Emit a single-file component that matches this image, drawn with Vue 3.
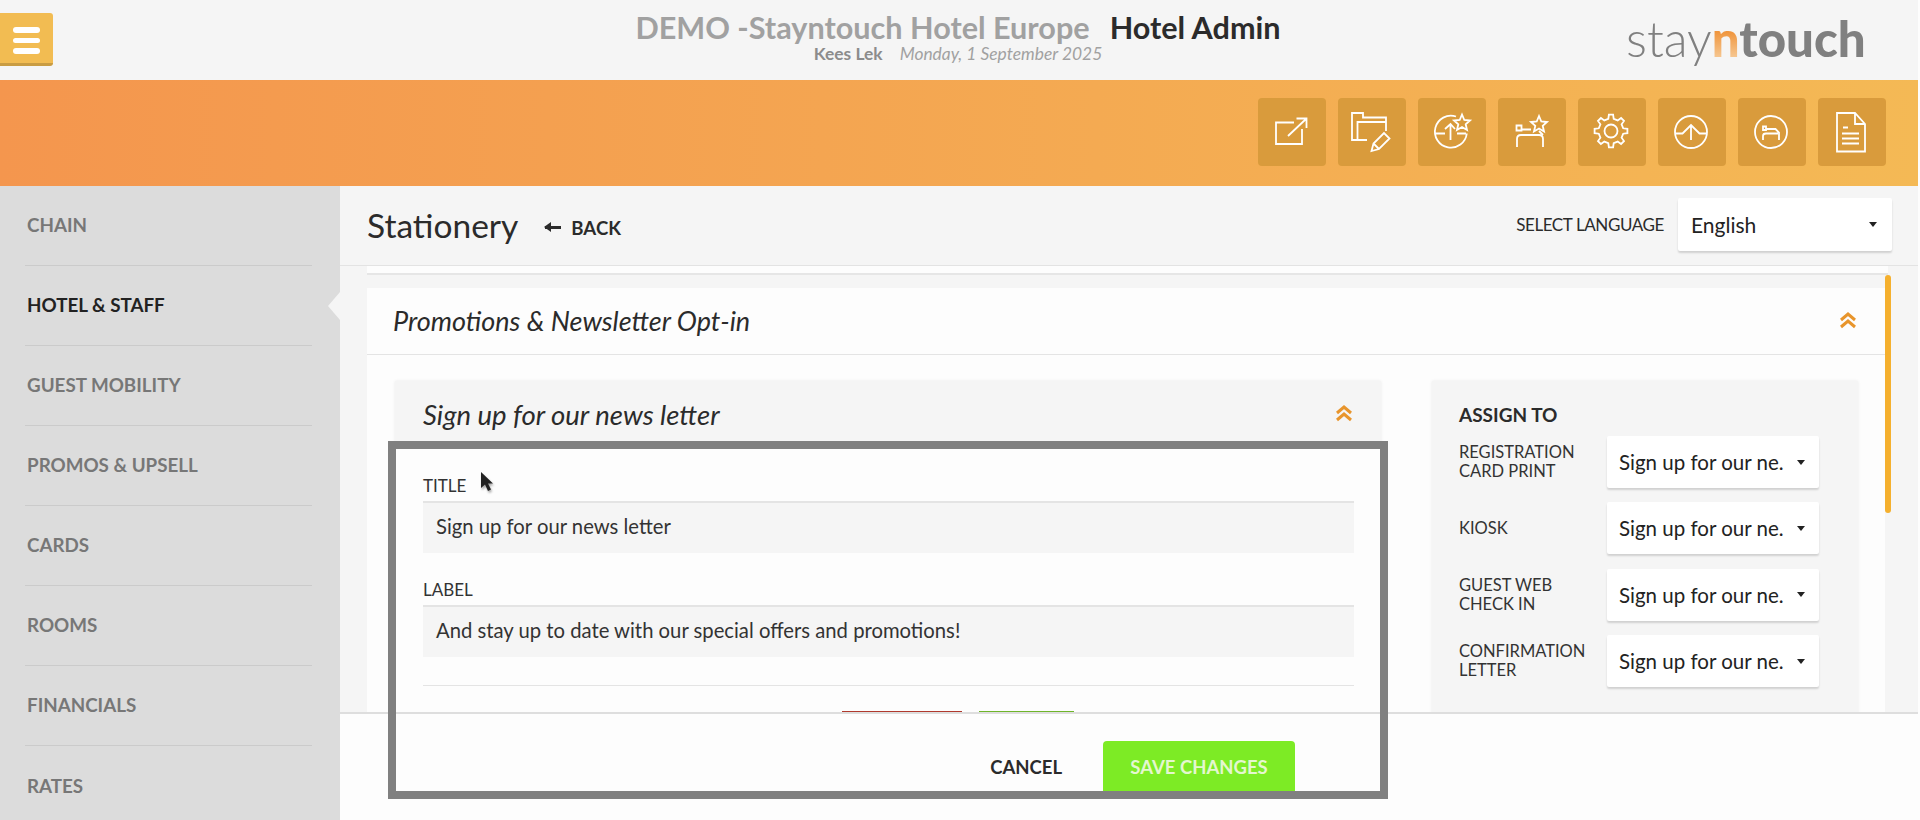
<script setup>
const nav = [
  { label: 'CHAIN' },
  { label: 'HOTEL & STAFF', active: true },
  { label: 'GUEST MOBILITY' },
  { label: 'PROMOS & UPSELL' },
  { label: 'CARDS' },
  { label: 'ROOMS' },
  { label: 'FINANCIALS' },
  { label: 'RATES' }
]
const assign = [
  ['REGISTRATION', 'CARD PRINT'],
  ['KIOSK'],
  ['GUEST WEB', 'CHECK IN'],
  ['CONFIRMATION', 'LETTER']
]
function gear(cx, cy, ro, ri, n) {
  const pts = []
  const step = (Math.PI * 2) / n
  for (let i = 0; i < n; i++) {
    const a = i * step - Math.PI / 2
    const w = step * 0.2
    const p = (r, t) => `${(cx + r * Math.cos(t)).toFixed(1)} ${(cy + r * Math.sin(t)).toFixed(1)}`
    pts.push(`${i ? 'L' : 'M'}${p(ri, a - w * 1.4)}`, `L${p(ro, a - w * 0.8)}`, `L${p(ro, a + w * 0.8)}`, `L${p(ri, a + w * 1.4)}`)
  }
  return pts.join(' ') + ' Z'
}
const gearPath = gear(33, 33, 16.5, 12.5, 8)
const star1 = 'M44 16.5 L46.3 22 L52 22.5 L47.7 26.3 L49 32 L44 29 L39 32 L40.3 26.3 L36 22.5 L41.7 22 Z'
const star2 = 'M41 18 L43.3 23.5 L49 24 L44.7 27.8 L46 33.5 L41 30.5 L36 33.5 L37.3 27.8 L33 24 L38.7 23.5 Z'
</script>

<template>
  <div class="page">
    <header class="top">
      <button class="burger" aria-label="Menu"><i></i><i></i><i></i></button>
      <div class="heading">
        <div class="heading-main">
          <span class="hotel">DEMO -Stayntouch Hotel Europe</span>
          <span class="admin">Hotel Admin</span>
        </div>
        <div class="heading-sub">
          <span class="user">Kees Lek</span>
          <span class="date">Monday, 1 September 2025</span>
        </div>
      </div>
      <div class="logo"><span class="l-stay">stay</span><span class="l-n">n</span><span class="l-touch">touch</span></div>
    </header>

    <div class="band">
      <div class="tile">
        <svg viewBox="0 0 68 68"><path d="M36 24.500H18V46H44V31" /><path d="M30 38L48 21M38.500 20.500H48.500V30" /></svg>
      </div>
      <div class="tile">
        <svg viewBox="0 0 68 68"><path d="M29 42H14V15H25V19.500H48V33" /><path d="M19.500 42V24H48" /><path d="M33.500 53L35.500 45.500L46 35L51.500 40.500L41 51ZM35.500 45.500L41 51" /></svg>
      </div>
      <div class="tile">
        <svg viewBox="0 0 68 68"><path d="M38 18.500A16 16 0 1 0 48.800 35.500M17 35.500H27M39 35.500H48M27 31L32.500 26L37 31M32.500 26V42" /><path :d="star1" /></svg>
      </div>
      <div class="tile">
        <svg viewBox="0 0 68 68"><path d="M19 49V41Q19 37 23 37H41Q45 37 45 41V49" /><path d="M18.500 27.500H23.500V32.500H18.500ZM23.500 31.500H33M41 33L45 37" /><path :d="star2" /></svg>
      </div>
      <div class="tile">
        <svg viewBox="0 0 68 68"><path :d="gearPath" /><circle cx="33" cy="33" r="6.500" /></svg>
      </div>
      <div class="tile">
        <svg viewBox="0 0 68 68"><circle cx="33" cy="34" r="16" /><path d="M17 35.500H24.500L33 27L41.500 35.500H49M33 27V42" /></svg>
      </div>
      <div class="tile">
        <svg viewBox="0 0 68 68"><circle cx="33" cy="34" r="16" /><path d="M25 28.500H28V32H25ZM28 31H37.500L41 34.500V42M25 42V38Q25 35.500 28 35.500H40" /></svg>
      </div>
      <div class="tile">
        <svg viewBox="0 0 68 68"><path d="M19 15H37L47 26V53.500H19ZM37 15V26H47" /><path d="M25 29.500H30M24 35.500H41M24 40.500H41M24 45.500H41" /></svg>
      </div>
    </div>

    <div class="body">
      <aside class="side">
        <div v-for="item in nav" :key="item.label" class="nav-item" :class="{ active: item.active }">
          <span>{{ item.label }}</span>
        </div>
      </aside>

      <main class="main">
        <div class="title-row">
          <h1>Stationery</h1>
          <div class="back"><span class="arrow"></span>BACK</div>
          <div class="lang">
            <span class="lang-label">SELECT LANGUAGE</span>
            <div class="select lang-select"><span>English</span><i class="caret"></i></div>
          </div>
        </div>

        <div class="scroller">
          <div class="scrollbar"></div>
          <div class="prev-strip"></div>
          <section class="panel">
            <div class="panel-head">
              <span>Promotions &amp; Newsletter Opt-in</span>
              <svg class="chev" viewBox="0 0 18 18"><path d="M2 8L9 2L16 8M2 15L9 9L16 15" /></svg>
            </div>
            <div class="panel-body">
              <div class="card">
                <div class="card-head">
                  <span>Sign up for our news letter</span>
                  <svg class="chev" viewBox="0 0 18 18"><path d="M2 8L9 2L16 8M2 15L9 9L16 15" /></svg>
                </div>
                <div class="card-body">
                  <div class="field-label">TITLE</div>
                  <div class="input">Sign up for our news letter</div>
                  <div class="field-label second">LABEL</div>
                  <div class="input">And stay up to date with our special offers and promotions!</div>
                  <div class="divider"></div>
                  <div class="form-actions"><i class="red"></i><i class="green"></i></div>
                </div>
              </div>
              <div class="assign">
                <h2>ASSIGN TO</h2>
                <div v-for="(row, i) in assign" :key="i" class="assign-row">
                  <div class="assign-label"><div v-for="l in row" :key="l">{{ l }}</div></div>
                  <div class="select small"><span>Sign up for our ne.</span><i class="caret"></i></div>
                </div>
              </div>
            </div>
          </section>
        </div>

        <footer class="foot">
          <span class="cancel">CANCEL</span>
          <button class="save">SAVE CHANGES</button>
        </footer>
      </main>
    </div>

    <div class="highlight"></div>
    <svg class="cursor" viewBox="0 0 14 22"><path d="M1 1V17L5 13.500L8 20L11 18.500L8 12.500H13Z" /></svg>
  </div>
</template>

<style>
html, body { margin: 0; background: #fdfdfd; }
</style>

<style scoped>
.page {
  position: relative;
  width: 1918px;
  height: 820px;
  overflow: hidden;
  display: flex;
  flex-direction: column;
  font-family: Lato, "Open Sans", sans-serif;
  color: #2b2b2b;
}
.top {
  height: 80px;
  flex: none;
  background: #f5f5f5;
  position: relative;
  display: flex;
}
.burger {
  margin: 13px 0 0;
  width: 53px;
  height: 53px;
  padding: 14px 13px 0;
  border: 0;
  border-bottom: 3px solid #c99c42;
  border-radius: 0 3px 3px 0;
  background: #f2bc52;
  box-sizing: border-box;
  display: flex;
  flex-direction: column;
  gap: 5px;
}
.burger i { display: block; width: 27px; height: 5.500px; border-radius: 3px; background: #fff; }
.heading {
  position: absolute;
  left: 603px;
  width: 710px;
  top: 10px;
  text-align: center;
}
.heading-main { font-size: 30.600px; font-weight: 700; line-height: 36px; white-space: nowrap; }
.hotel { color: #a1a1a1; margin-right: 20px; }
.admin { color: #2b2b2b; }
.heading-sub { font-size: 17.400px; line-height: 20px; margin-top: -2px; white-space: nowrap; }
.user { color: #8c8c8c; font-weight: 700; margin-right: 17px; }
.date { color: #a1a1a1; font-style: italic; }
.logo {
  position: absolute;
  left: 1626px;
  top: 5px;
  font-size: 49.200px;
  line-height: 66px;
  color: #808080;
  white-space: nowrap;
}
.l-stay { font-weight: 300; }
.l-n {
  font-weight: 900;
  background: linear-gradient(#ee8a2a 30%, #f8d9b0 100%);
  -webkit-background-clip: text;
  background-clip: text;
  color: transparent;
}
.l-touch { font-weight: 900; }

.band {
  height: 106px;
  flex: none;
  background: linear-gradient(90deg, #f4964e, #f4b955);
  display: flex;
  justify-content: flex-end;
  align-items: flex-start;
  gap: 12px;
  padding: 18px 32px 0 0;
  box-sizing: border-box;
}
.tile { width: 68px; height: 68px; border-radius: 4px; background: #d99b3c; }
.tile svg { display: block; width: 68px; height: 68px; }
.tile path, .tile circle { fill: none; stroke: #fff; stroke-width: 1.800; stroke-linejoin: miter; }

.body { flex: 1; min-height: 0; display: flex; }
.side {
  width: 340px;
  flex: none;
  background: #dcdcdc;
  padding: 0 28px 0 27px;
  box-sizing: border-box;
}
.nav-item {
  position: relative;
  height: 80px;
  display: flex;
  align-items: center;
  padding-bottom: 2px;
  box-sizing: border-box;
  border-bottom: 1px solid #cbcbcb;
  margin-left: -2px;
  padding-left: 2px;
  font-size: 18.800px;
  font-weight: 700;
  color: #777;
}
.nav-item:last-child { border-bottom: 0; }
.nav-item.active { color: #222; }
.nav-item.active::after {
  content: "";
  position: absolute;
  right: -28px;
  top: 26px;
  border: 14px solid transparent;
  border-left: 0;
  border-right: 12px solid #f5f5f5;
}

.main {
  flex: 1;
  min-width: 0;
  background: #f5f5f5;
  display: flex;
  flex-direction: column;
  position: relative;
}
.title-row {
  height: 80px;
  flex: none;
  display: flex;
  align-items: center;
  padding: 0 26px 2px 27px;
  box-sizing: border-box;
  border-bottom: 1px solid #e3e3e3;
}
h1 { margin: 0; font-size: 33.500px; font-weight: 400; color: #2b2b2b; }
.back {
  margin-left: 27px;
  padding-top: 6px;
  display: flex;
  align-items: center;
  font-size: 18.600px;
  font-weight: 700;
  color: #2b2b2b;
}
.arrow {
  position: relative;
  width: 16px;
  height: 3px;
  margin-right: 10px;
  background: #2b2b2b;
}
.arrow::before {
  content: "";
  position: absolute;
  left: -1px;
  top: -4px;
  border: 5.500px solid transparent;
  border-left: 0;
  border-right: 7px solid #2b2b2b;
}
.lang { margin-left: auto; display: flex; align-items: center; }
.lang-label { font-size: 17px; letter-spacing: -0.400px; margin-right: 14px; }
.select {
  background: #fff;
  box-shadow: 0 2px 2px rgba(0, 0, 0, 0.15);
  display: flex;
  align-items: center;
  justify-content: space-between;
  box-sizing: border-box;
  border-radius: 2px;
  color: #222;
}
.lang-select { width: 214px; height: 53px; padding: 0 15px 0 13px; font-size: 21px; }
.caret {
  width: 0;
  height: 0;
  border: 4px solid transparent;
  border-bottom: 0;
  border-top: 5px solid #222;
}

.scroller { flex: 1; min-height: 0; overflow: hidden; position: relative; padding-left: 27px; }
.scrollbar {
  position: absolute;
  left: 1545px;
  top: 9px;
  width: 6px;
  height: 238px;
  border-radius: 3px;
  background: #f5b02e;
}
.prev-strip { width: 1521px; height: 7px; background: #fdfdfd; border-bottom: 2px solid #e6e6e6; }
.panel { width: 1518px; margin-top: 13px; background: #fdfdfd; }
.panel-head {
  height: 66px;
  display: flex;
  align-items: center;
  justify-content: space-between;
  padding: 0 28px 0 26px;
  border-bottom: 1px solid #e4e4e4;
  font-size: 27px;
  font-style: italic;
}
.panel-head span { position: relative; top: -1px; }
.chev { width: 18px; height: 18px; flex: none; }
.chev path { fill: none; stroke: #e8952c; stroke-width: 3; }
.panel-body {
  display: flex;
  align-items: flex-start;
  gap: 51px;
  padding: 26px 26px 0 28px;
}
.card { width: 986px; flex: none; box-shadow: 0 0 3px rgba(0, 0, 0, 0.08); }
.card-head {
  height: 66px;
  background: #f5f5f5;
  display: flex;
  align-items: center;
  justify-content: space-between;
  padding: 0 28px 0 28px;
  font-size: 27.500px;
  font-style: italic;
}
.card-body { padding: 27px 27px 0 28px; background: #fdfdfd; }
.field-label { font-size: 17px; line-height: 24px; color: #333; margin-bottom: 3px; }
.field-label.second { margin-top: 25px; }
.input {
  height: 52px;
  line-height: 47px;
  padding-left: 13px;
  background: #f5f5f5;
  border-top: 2px solid #e4e4e4;
  box-sizing: border-box;
  font-size: 20.250px;
  color: #333;
}
.divider { height: 1px; margin-top: 28px; background: #e4e4e4; }
.form-actions { display: flex; gap: 17px; margin: 25px 0 0 419px; }
.form-actions i { display: block; height: 50px; }
.red { width: 120px; background: #b03a2e; }
.green { width: 95px; background: #6fb52a; }
.assign {
  width: 426px;
  flex: none;
  height: 420px;
  background: #f5f5f5;
  padding: 20px 0 0 27px;
  box-sizing: border-box;
  box-shadow: 0 0 3px rgba(0, 0, 0, 0.08);
}
h2 { margin: 0 0 7px; font-size: 19px; font-weight: 700; line-height: 28px; color: #2b2b2b; }
.assign-row { display: flex; align-items: center; height: 52px; margin-bottom: 14.400px; }
.assign-label { width: 148px; flex: none; font-size: 16.500px; line-height: 19px; color: #333; }
.small { width: 212px; height: 52px; padding: 0 14px 0 12px; font-size: 20.500px; }
.small span { white-space: nowrap; }

.foot {
  height: 108px;
  flex: none;
  position: relative;
  background: #fdfdfd;
  border-top: 2px solid #dedede;
  box-sizing: border-box;
  display: flex;
  justify-content: flex-end;
  align-items: flex-start;
  padding: 27px 623px 0 0;
}
.cancel { font-size: 18.500px; font-weight: 700; line-height: 52px; color: #2b2b2b; margin-right: 41px; }
.save {
  width: 192px;
  height: 54px;
  border: 0;
  border-radius: 4px;
  background: #7deb25;
  color: #e4f7cf;
  font-family: inherit;
  font-size: 18.500px;
  font-weight: 700;
  padding-bottom: 4px;
}

.highlight {
  position: absolute;
  left: 388px;
  top: 441px;
  width: 1000px;
  height: 358px;
  box-sizing: border-box;
  border: 8px solid #808080;
}
.cursor {
  position: absolute;
  left: 480px;
  top: 471px;
  width: 14px;
  height: 22px;
  filter: drop-shadow(1px 2px 1px rgba(0, 0, 0, 0.35));
}
.cursor path { fill: #222; }
</style>
